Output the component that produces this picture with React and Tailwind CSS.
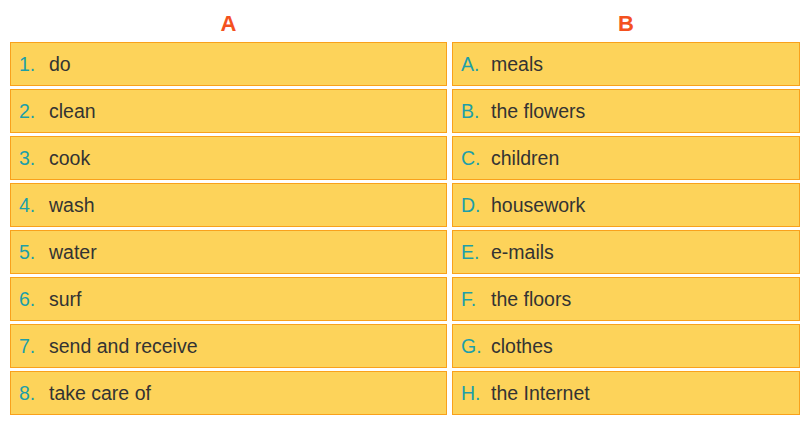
const left = [
    ['1.', 'do'],
    ['2.', 'clean'],
    ['3.', 'cook'],
    ['4.', 'wash'],
    ['5.', 'water'],
    ['6.', 'surf'],
    ['7.', 'send and receive'],
    ['8.', 'take care of'],
];

const right = [
    ['A.', 'meals'],
    ['B.', 'the flowers'],
    ['C.', 'children'],
    ['D.', 'housework'],
    ['E.', 'e-mails'],
    ['F.', 'the floors'],
    ['G.', 'clothes'],
    ['H.', 'the Internet'],
];

const Cell = ({ num, text }) => (
    <div className="h-[44px] flex items-center border border-[#f9a11b] bg-[#fdd35a] pl-[8px] pt-[1px] text-[19.5px] text-[#333333]">
        <span className="w-[30px] text-[#1d9fa8]">{num}</span>
        <span>{text}</span>
    </div>
);

const App = () => {
    return (
        <div className="w-[809px] h-[428px] bg-white pl-[10px] pr-[9px] font-['Liberation_Sans',Arial,sans-serif]">
            <div className="grid grid-cols-[437px_348px] gap-x-[5px]">
                <h2 className="h-[42px] pt-[11px] text-center text-[22px] leading-[25px] font-bold text-[#f4511e]">A</h2>
                <h2 className="h-[42px] pt-[11px] text-center text-[22px] leading-[25px] font-bold text-[#f4511e]">B</h2>
            </div>
            <div className="grid grid-cols-[437px_348px] gap-x-[5px] gap-y-[3px]">
                {left.map((row, i) => (
                    <>
                        <Cell key={'l' + i} num={row[0]} text={row[1]} />
                        <Cell key={'r' + i} num={right[i][0]} text={right[i][1]} />
                    </>
                ))}
            </div>
        </div>
    );
};

export default App;
